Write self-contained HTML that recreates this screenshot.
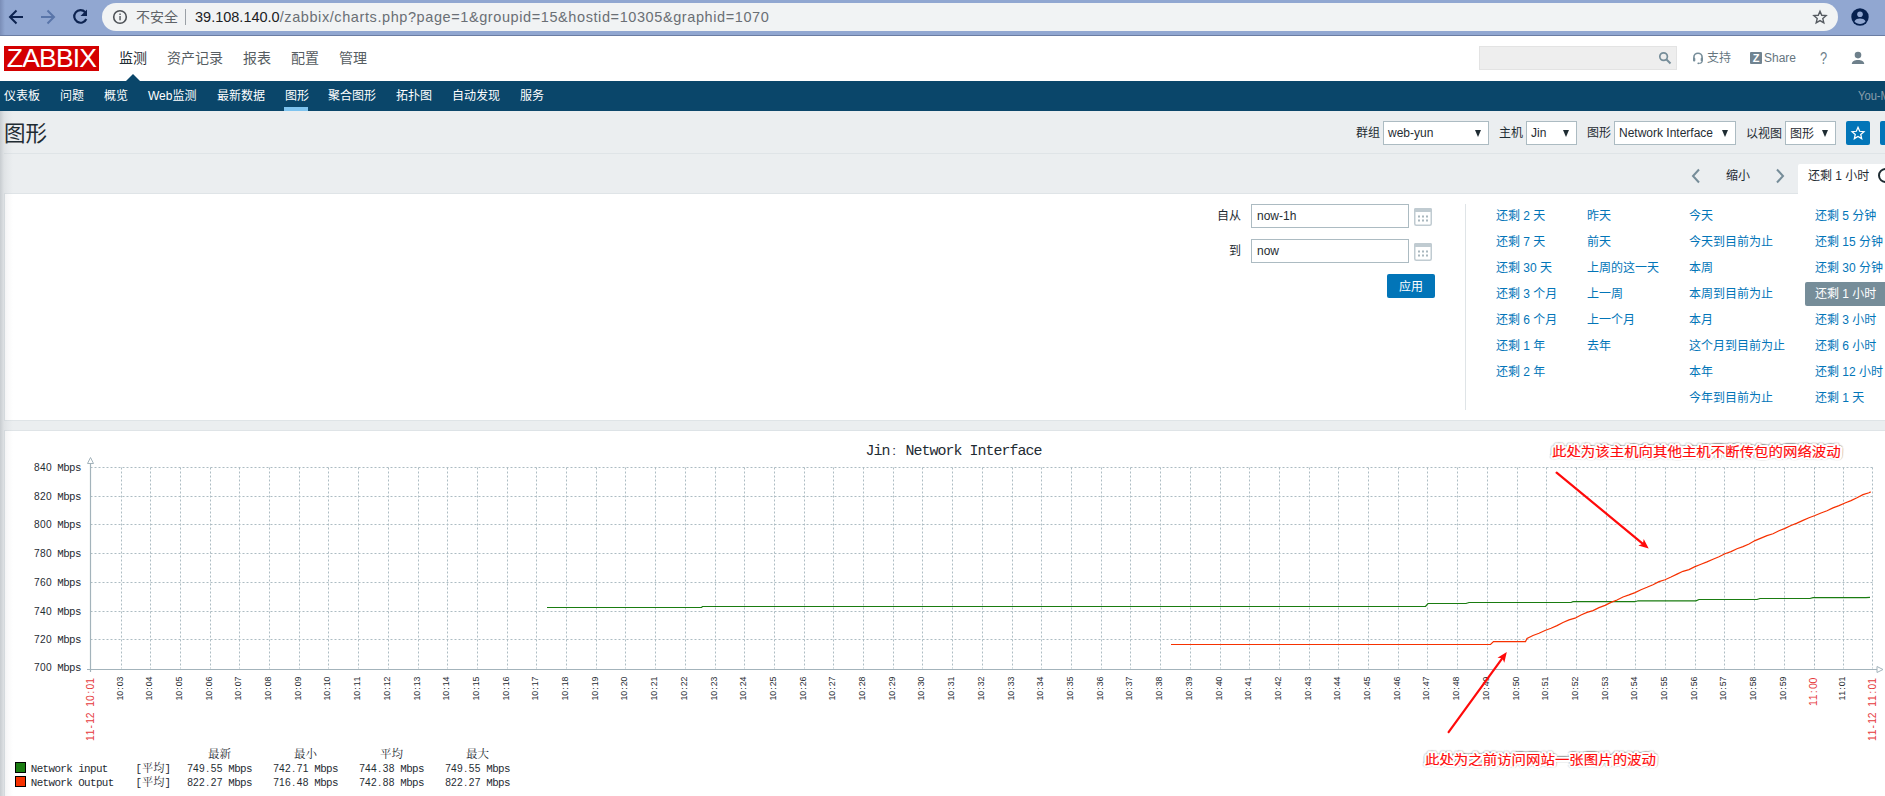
<!DOCTYPE html>
<html lang="zh-CN"><head><meta charset="utf-8"><title>图形</title><style>
*{box-sizing:border-box;margin:0;padding:0}
html,body{width:1885px;height:796px;overflow:hidden;background:#ebeef0}
body{position:relative;font-family:"Liberation Sans","Noto Sans CJK SC",sans-serif;font-size:12px;color:#1f2c33}
.a{position:absolute;white-space:nowrap}
.t{position:absolute;white-space:nowrap;line-height:16px;height:16px}
#bbar{left:0;top:0;width:1885px;height:36px;background:#91a7d1;border-bottom:1px solid #6b7da3}
#pill{left:102px;top:3px;width:1736px;height:28px;border-radius:14px;background:#f1f3f4}
#hdr{left:0;top:36px;width:1885px;height:45px;background:#fff}
#logo{left:4px;top:46px;width:95px;height:25px;background:#d40000;color:#fff;font-size:26.500px;line-height:25px;text-align:center;letter-spacing:-0.8px}
.m1{font-size:14px;color:#565d62;top:50px;line-height:16px}
#nav{left:0;top:81px;width:1885px;height:30px;background:#0a466a}
.m2{font-size:12px;color:#fff;top:88px;line-height:16px}
.lbl{top:125px;line-height:16px;font-size:12px}
.sel{top:121px;height:24px;background:#fff;border:1px solid #acbbc2;font-size:12px;line-height:22px;padding-left:4px}
.sel i{position:absolute;right:7px;top:8px;width:0;height:0;border-left:3.5px solid transparent;border-right:3.5px solid transparent;border-top:7px solid #1f2c33}
.inp{height:24px;background:#fff;border:1px solid #acbbc2;font-size:12px;line-height:22px;padding-left:5px;width:158px;left:1251px}
.lk{color:#0275b8;font-size:12px;line-height:16px}
.btn{background:#0275b8;border-radius:2px;color:#fff}
</style></head><body>
<div class="a" id="bbar"></div>
<div class="a" id="pill"></div>
<svg class="a" style="left:0;top:0" width="100" height="36" viewBox="0 0 100 36">
<g fill="none" stroke="#0d2350" stroke-width="2" stroke-linecap="butt" stroke-linejoin="miter">
<path d="M23 17H10.5M16.5 10.5L10 17l6.500 6.500"/>
</g>
<g fill="none" stroke="#5975a9" stroke-width="2">
<path d="M41 17h12.500M47.500 10.500L54 17l-6.500 6.500"/>
</g>
<g fill="none" stroke="#0d2350" stroke-width="2">
<path d="M85.200 12.200A6.300 6.300 0 1 0 86.300 19" stroke-width="2.200"/>
</g>
<path d="M87 9.500v6.500h-6.500z" fill="#0d2350"/>
</svg>
<svg class="a" style="left:112px;top:9px" width="16" height="16" viewBox="0 0 16 16"><circle cx="8" cy="8" r="6.300" fill="none" stroke="#4d5156" stroke-width="1.600"/><rect x="7.300" y="7" width="1.500" height="4.300" fill="#5f6368"/><rect x="7.300" y="4.500" width="1.500" height="1.500" fill="#5f6368"/></svg>
<div class="t" style="left:136px;top:9px;font-size:14px;color:#5f6368">不安全</div>
<div class="a" style="left:185px;top:9px;width:1px;height:16px;background:#9aa0a6"></div>
<div class="t" id="url" style="left:195px;top:9px;font-size:14.500px;color:#6a6f75"><span style="color:#202124">39.108.140.0</span><span style="letter-spacing:0.590px">/zabbix/charts.php?page=1&amp;groupid=15&amp;hostid=10305&amp;graphid=1070</span></div>
<svg class="a" style="left:1812px;top:9px" width="16" height="16" viewBox="0 0 24 24"><path d="M12 3.300l2.600 6.100 6.600.6-5 4.300 1.500 6.500L12 17.300l-5.700 3.500 1.500-6.500-5-4.300 6.600-.6z" fill="none" stroke="#555a60" stroke-width="2.100" stroke-linejoin="miter"/></svg>
<svg class="a" style="left:1851px;top:8px" width="18" height="18" viewBox="0 0 18 18"><circle cx="9" cy="9" r="8.700" fill="#05204f"/><circle cx="9" cy="6.300" r="2.800" fill="#91a7d1"/><path d="M3.400 13.200c1.200-2 3.200-2.700 5.600-2.700s4.400.7 5.600 2.700c-1.300 1.700-3.300 2.700-5.600 2.700s-4.300-1-5.600-2.700z" fill="#91a7d1"/></svg>
<div class="a" id="hdr"></div>
<div class="a" id="logo">ZABBIX</div>
<div class="a m1" style="left:119px;color:#1f2c33">监测</div>
<div class="a m1" style="left:167px">资产记录</div>
<div class="a m1" style="left:243px">报表</div>
<div class="a m1" style="left:291px">配置</div>
<div class="a m1" style="left:339px">管理</div>
<div class="a" style="left:1479px;top:46px;width:198px;height:24px;background:#eee;border:1px solid #e3e3e3"></div>
<svg class="a" style="left:1658px;top:51px" width="14" height="14" viewBox="0 0 14 14"><circle cx="5.600" cy="5.600" r="3.800" fill="none" stroke="#768d99" stroke-width="1.700"/><path d="M8.500 8.500l4 4" stroke="#768d99" stroke-width="2" /></svg>
<svg class="a" style="left:1692px;top:51px" width="12" height="14" viewBox="0 0 12 14"><path d="M1.900 8V6.300a4.100 4.100 0 0 1 8.200 0V8" fill="none" stroke="#768d99" stroke-width="1.600"/><rect x="1" y="6.800" width="2.300" height="3.700" rx="1" fill="#768d99"/><rect x="8.700" y="6.800" width="2.300" height="3.700" rx="1" fill="#768d99"/><path d="M10.200 10c0 1.800-1.500 2.300-3.600 2.300" fill="none" stroke="#768d99" stroke-width="1.100"/><circle cx="6.300" cy="12.300" r="0.900" fill="#768d99"/></svg>
<div class="t" style="left:1707px;top:50px;color:#66767f">支持</div>
<div class="a" style="left:1750px;top:52px;width:12px;height:12px;background:#718491;border-radius:1px;color:#fff;font-weight:bold;font-size:11px;line-height:12px;text-align:center">Z</div>
<div class="t" style="left:1764px;top:50px;color:#66767f">Share</div>
<div class="t" style="left:1819px;top:51px;font-size:16px;color:#6e808b;transform:scaleX(.8)">?</div>
<svg class="a" style="left:1851px;top:51px" width="14" height="14" viewBox="0 0 14 14"><circle cx="7" cy="4.100" r="3.300" fill="#6e808b"/><path d="M0.800 13c0-3 2.800-4.100 6.200-4.100s6.200 1.100 6.200 4.100z" fill="#6e808b"/></svg>
<div class="a" id="nav"></div>
<div class="a" style="left:126px;top:74px;width:0;height:0;border-left:7px solid transparent;border-right:7px solid transparent;border-bottom:7px solid #0a466a"></div>
<div class="a m2" style="left:4px">仪表板</div>
<div class="a m2" style="left:60px">问题</div>
<div class="a m2" style="left:104px">概览</div>
<div class="a m2" style="left:148px">Web监测</div>
<div class="a m2" style="left:217px">最新数据</div>
<div class="a m2" style="left:285px">图形</div>
<div class="a m2" style="left:328px">聚合图形</div>
<div class="a m2" style="left:396px">拓扑图</div>
<div class="a m2" style="left:452px">自动发现</div>
<div class="a m2" style="left:520px">服务</div>
<div class="a" style="left:284px;top:107px;width:24px;height:4px;background:#7fc4ef"></div>
<div class="t" style="left:1857.500px;top:88px;font-size:12px;color:#8a9fac;transform:scaleX(.93);transform-origin:0 0">You-M</div>
<div class="a" style="left:4px;top:120px;font-size:21.500px;line-height:28px;color:#1f2c33">图形</div>
<div class="a lbl" style="left:1356px">群组</div>
<div class="a sel" style="left:1383px;width:106px">web-yun<i></i></div>
<div class="a lbl" style="left:1499px">主机</div>
<div class="a sel" style="left:1526px;width:51px">Jin<i></i></div>
<div class="a lbl" style="left:1587px">图形</div>
<div class="a sel" style="left:1614px;width:122px">Network Interface<i></i></div>
<div class="a lbl" style="left:1746px;top:126px">以视图</div>
<div class="a sel" style="left:1785px;width:51px;line-height:24px">图形<i></i></div>
<div class="a btn" style="left:1846px;top:121px;width:24px;height:24px"></div>
<svg class="a" style="left:1850px;top:125px" width="16" height="16" viewBox="0 0 24 24"><path d="M12 3.500l2.500 5.900 6.400.6-4.800 4.200 1.400 6.300L12 17.200l-5.500 3.300 1.400-6.300-4.800-4.200 6.400-.6z" fill="none" stroke="#fff" stroke-width="1.900" stroke-linejoin="miter"/></svg>
<div class="a btn" style="left:1880px;top:121px;width:24px;height:24px"></div>
<div class="a" style="left:4px;top:153px;width:1881px;height:1px;background:#dfe4e7"></div>
<svg class="a" style="left:1690px;top:168px" width="12" height="16" viewBox="0 0 12 16"><path d="M9 1.500L3 8l6 6.500" fill="none" stroke="#768d99" stroke-width="2"/></svg>
<div class="t" style="left:1726px;top:168px">缩小</div>
<svg class="a" style="left:1774px;top:168px" width="12" height="16" viewBox="0 0 12 16"><path d="M3 1.500L9 8l-6 6.500" fill="none" stroke="#768d99" stroke-width="2"/></svg>
<div class="a" style="left:1798px;top:164px;width:100px;height:32px;background:#fff;border-radius:2px 0 0 0"></div>
<div class="t" style="left:1808px;top:168px">还剩 1 小时</div>
<div class="a" style="left:1878px;top:168px;width:15px;height:15px;border:2px solid #1f2c33;border-radius:50%"></div>
<div class="a" style="left:4px;top:193px;width:1881px;height:228px;background:#fff;border:1px solid #dfe4e7;border-right:0"></div>
<div class="a" style="left:1798px;top:190px;width:100px;height:6px;background:#fff"></div>
<div class="t" style="left:1217px;top:208px">自从</div>
<div class="a inp" style="top:204px">now-1h</div>
<div class="t" style="left:1229px;top:243px">到</div>
<div class="a inp" style="top:239px">now</div>
<svg class="a" style="left:1414px;top:208px" width="18" height="18" viewBox="0 0 18 18"><rect x="0.750" y="0.750" width="16.500" height="16.500" rx="1.500" fill="#fff" stroke="#c0cbd1" stroke-width="1.500"/><rect x="0" y="0" width="18" height="4" rx="1.500" fill="#c0cbd1"/><g fill="#a9b7be"><rect x="4" y="7.500" width="2" height="2"/><rect x="8" y="7.500" width="2" height="2"/><rect x="12" y="7.500" width="2" height="2"/><rect x="4" y="11.500" width="2" height="2"/><rect x="8" y="11.500" width="2" height="2"/><rect x="12" y="11.500" width="2" height="2"/></g></svg>
<svg class="a" style="left:1414px;top:243px" width="18" height="18" viewBox="0 0 18 18"><rect x="0.750" y="0.750" width="16.500" height="16.500" rx="1.500" fill="#fff" stroke="#c0cbd1" stroke-width="1.500"/><rect x="0" y="0" width="18" height="4" rx="1.500" fill="#c0cbd1"/><g fill="#a9b7be"><rect x="4" y="7.500" width="2" height="2"/><rect x="8" y="7.500" width="2" height="2"/><rect x="12" y="7.500" width="2" height="2"/><rect x="4" y="11.500" width="2" height="2"/><rect x="8" y="11.500" width="2" height="2"/><rect x="12" y="11.500" width="2" height="2"/></g></svg>
<div class="a btn" style="left:1387px;top:274px;width:48px;height:24px;line-height:26px;text-align:center;font-size:12px">应用</div>
<div class="a" style="left:1465px;top:204px;width:1px;height:206px;background:#dfe4e7"></div>
<div class="a" style="left:1805px;top:282px;width:90px;height:24px;background:#768d99;border-radius:2px"></div>
<div class="a lk" style="left:1496px;top:208px">还剩 2 天</div>
<div class="a lk" style="left:1496px;top:234px">还剩 7 天</div>
<div class="a lk" style="left:1496px;top:260px">还剩 30 天</div>
<div class="a lk" style="left:1496px;top:286px">还剩 3 个月</div>
<div class="a lk" style="left:1496px;top:312px">还剩 6 个月</div>
<div class="a lk" style="left:1496px;top:338px">还剩 1 年</div>
<div class="a lk" style="left:1496px;top:364px">还剩 2 年</div>
<div class="a lk" style="left:1587px;top:208px">昨天</div>
<div class="a lk" style="left:1587px;top:234px">前天</div>
<div class="a lk" style="left:1587px;top:260px">上周的这一天</div>
<div class="a lk" style="left:1587px;top:286px">上一周</div>
<div class="a lk" style="left:1587px;top:312px">上一个月</div>
<div class="a lk" style="left:1587px;top:338px">去年</div>
<div class="a lk" style="left:1689px;top:208px">今天</div>
<div class="a lk" style="left:1689px;top:234px">今天到目前为止</div>
<div class="a lk" style="left:1689px;top:260px">本周</div>
<div class="a lk" style="left:1689px;top:286px">本周到目前为止</div>
<div class="a lk" style="left:1689px;top:312px">本月</div>
<div class="a lk" style="left:1689px;top:338px">这个月到目前为止</div>
<div class="a lk" style="left:1689px;top:364px">本年</div>
<div class="a lk" style="left:1689px;top:390px">今年到目前为止</div>
<div class="a lk" style="left:1815px;top:208px">还剩 5 分钟</div>
<div class="a lk" style="left:1815px;top:234px">还剩 15 分钟</div>
<div class="a lk" style="left:1815px;top:260px">还剩 30 分钟</div>
<div class="a lk" style="left:1815px;top:286px;color:#fff">还剩 1 小时</div>
<div class="a lk" style="left:1815px;top:312px">还剩 3 小时</div>
<div class="a lk" style="left:1815px;top:338px">还剩 6 小时</div>
<div class="a lk" style="left:1815px;top:364px">还剩 12 小时</div>
<div class="a lk" style="left:1815px;top:390px">还剩 1 天</div>
<div class="a" style="left:4px;top:430px;width:1881px;height:370px;background:#fff;border:1px solid #dfe4e7;border-right:0"></div>
<svg class="a" style="left:0;top:0;font-family:'Liberation Mono','Noto Serif CJK SC',monospace" width="1885" height="796" viewBox="0 0 1885 796">
<text xml:space="preserve" transform="translate(81.20,671.10)" x="-47.08 -41.18 -35.28 -29.80 -23.90 -18.00 -12.09 -6.19" y="0" font-size="10.82" fill="#1f2c33"><tspan font-family="'Liberation Sans','Noto Sans CJK SC',sans-serif" font-size="10.20">700</tspan> Mbps</text>
<line x1="90.5" y1="639.5" x2="1872.5" y2="639.5" stroke="#adbcc3" stroke-width="1" stroke-dasharray="2 2"/>
<text xml:space="preserve" transform="translate(81.20,643.10)" x="-47.08 -41.18 -35.28 -29.80 -23.90 -18.00 -12.09 -6.19" y="0" font-size="10.82" fill="#1f2c33"><tspan font-family="'Liberation Sans','Noto Sans CJK SC',sans-serif" font-size="10.20">720</tspan> Mbps</text>
<line x1="90.5" y1="611.5" x2="1872.5" y2="611.5" stroke="#adbcc3" stroke-width="1" stroke-dasharray="2 2"/>
<text xml:space="preserve" transform="translate(81.20,615.10)" x="-47.08 -41.18 -35.28 -29.80 -23.90 -18.00 -12.09 -6.19" y="0" font-size="10.82" fill="#1f2c33"><tspan font-family="'Liberation Sans','Noto Sans CJK SC',sans-serif" font-size="10.20">740</tspan> Mbps</text>
<line x1="90.5" y1="582.5" x2="1872.5" y2="582.5" stroke="#adbcc3" stroke-width="1" stroke-dasharray="2 2"/>
<text xml:space="preserve" transform="translate(81.20,586.10)" x="-47.08 -41.18 -35.28 -29.80 -23.90 -18.00 -12.09 -6.19" y="0" font-size="10.82" fill="#1f2c33"><tspan font-family="'Liberation Sans','Noto Sans CJK SC',sans-serif" font-size="10.20">760</tspan> Mbps</text>
<line x1="90.5" y1="553.5" x2="1872.5" y2="553.5" stroke="#adbcc3" stroke-width="1" stroke-dasharray="2 2"/>
<text xml:space="preserve" transform="translate(81.20,557.10)" x="-47.08 -41.18 -35.28 -29.80 -23.90 -18.00 -12.09 -6.19" y="0" font-size="10.82" fill="#1f2c33"><tspan font-family="'Liberation Sans','Noto Sans CJK SC',sans-serif" font-size="10.20">780</tspan> Mbps</text>
<line x1="90.5" y1="524.5" x2="1872.5" y2="524.5" stroke="#adbcc3" stroke-width="1" stroke-dasharray="2 2"/>
<text xml:space="preserve" transform="translate(81.20,528.10)" x="-47.08 -41.18 -35.28 -29.80 -23.90 -18.00 -12.09 -6.19" y="0" font-size="10.82" fill="#1f2c33"><tspan font-family="'Liberation Sans','Noto Sans CJK SC',sans-serif" font-size="10.20">800</tspan> Mbps</text>
<line x1="90.5" y1="496.5" x2="1872.5" y2="496.5" stroke="#adbcc3" stroke-width="1" stroke-dasharray="2 2"/>
<text xml:space="preserve" transform="translate(81.20,500.10)" x="-47.08 -41.18 -35.28 -29.80 -23.90 -18.00 -12.09 -6.19" y="0" font-size="10.82" fill="#1f2c33"><tspan font-family="'Liberation Sans','Noto Sans CJK SC',sans-serif" font-size="10.20">820</tspan> Mbps</text>
<line x1="90.5" y1="467.5" x2="1872.5" y2="467.5" stroke="#adbcc3" stroke-width="1" stroke-dasharray="2 2"/>
<text xml:space="preserve" transform="translate(81.20,471.10)" x="-47.08 -41.18 -35.28 -29.80 -23.90 -18.00 -12.09 -6.19" y="0" font-size="10.82" fill="#1f2c33"><tspan font-family="'Liberation Sans','Noto Sans CJK SC',sans-serif" font-size="10.20">840</tspan> Mbps</text>
<line x1="121.5" y1="467.5" x2="121.5" y2="668.5" stroke="#adbcc3" stroke-width="1" stroke-dasharray="2 2"/>
<text xml:space="preserve" transform="translate(123.30,700.40) rotate(-90)" x="-0.07 4.69 10.68 14.21 18.97" y="0" font-size="8.73" fill="#1f2c33"><tspan font-family="'Liberation Sans','Noto Sans CJK SC',sans-serif" font-size="8.80">10:03</tspan></text>
<line x1="150.5" y1="467.5" x2="150.5" y2="668.5" stroke="#adbcc3" stroke-width="1" stroke-dasharray="2 2"/>
<text xml:space="preserve" transform="translate(152.30,700.40) rotate(-90)" x="-0.07 4.69 10.68 14.21 18.97" y="0" font-size="8.73" fill="#1f2c33"><tspan font-family="'Liberation Sans','Noto Sans CJK SC',sans-serif" font-size="8.80">10:04</tspan></text>
<line x1="180.5" y1="467.5" x2="180.5" y2="668.5" stroke="#adbcc3" stroke-width="1" stroke-dasharray="2 2"/>
<text xml:space="preserve" transform="translate(182.30,700.40) rotate(-90)" x="-0.07 4.69 10.68 14.21 18.97" y="0" font-size="8.73" fill="#1f2c33"><tspan font-family="'Liberation Sans','Noto Sans CJK SC',sans-serif" font-size="8.80">10:05</tspan></text>
<line x1="210.5" y1="467.5" x2="210.5" y2="668.5" stroke="#adbcc3" stroke-width="1" stroke-dasharray="2 2"/>
<text xml:space="preserve" transform="translate(212.30,700.40) rotate(-90)" x="-0.07 4.69 10.68 14.21 18.97" y="0" font-size="8.73" fill="#1f2c33"><tspan font-family="'Liberation Sans','Noto Sans CJK SC',sans-serif" font-size="8.80">10:06</tspan></text>
<line x1="239.5" y1="467.5" x2="239.5" y2="668.5" stroke="#adbcc3" stroke-width="1" stroke-dasharray="2 2"/>
<text xml:space="preserve" transform="translate(241.30,700.40) rotate(-90)" x="-0.07 4.69 10.68 14.21 18.97" y="0" font-size="8.73" fill="#1f2c33"><tspan font-family="'Liberation Sans','Noto Sans CJK SC',sans-serif" font-size="8.80">10:07</tspan></text>
<line x1="269.5" y1="467.5" x2="269.5" y2="668.5" stroke="#adbcc3" stroke-width="1" stroke-dasharray="2 2"/>
<text xml:space="preserve" transform="translate(271.30,700.40) rotate(-90)" x="-0.07 4.69 10.68 14.21 18.97" y="0" font-size="8.73" fill="#1f2c33"><tspan font-family="'Liberation Sans','Noto Sans CJK SC',sans-serif" font-size="8.80">10:08</tspan></text>
<line x1="299.5" y1="467.5" x2="299.5" y2="668.5" stroke="#adbcc3" stroke-width="1" stroke-dasharray="2 2"/>
<text xml:space="preserve" transform="translate(301.30,700.40) rotate(-90)" x="-0.07 4.69 10.68 14.21 18.97" y="0" font-size="8.73" fill="#1f2c33"><tspan font-family="'Liberation Sans','Noto Sans CJK SC',sans-serif" font-size="8.80">10:09</tspan></text>
<line x1="328.5" y1="467.5" x2="328.5" y2="668.5" stroke="#adbcc3" stroke-width="1" stroke-dasharray="2 2"/>
<text xml:space="preserve" transform="translate(330.30,700.40) rotate(-90)" x="-0.07 4.69 10.68 14.21 18.97" y="0" font-size="8.73" fill="#1f2c33"><tspan font-family="'Liberation Sans','Noto Sans CJK SC',sans-serif" font-size="8.80">10:10</tspan></text>
<line x1="358.5" y1="467.5" x2="358.5" y2="668.5" stroke="#adbcc3" stroke-width="1" stroke-dasharray="2 2"/>
<text xml:space="preserve" transform="translate(360.30,700.40) rotate(-90)" x="-0.07 4.69 10.68 14.21 18.97" y="0" font-size="8.73" fill="#1f2c33"><tspan font-family="'Liberation Sans','Noto Sans CJK SC',sans-serif" font-size="8.80">10:11</tspan></text>
<line x1="388.5" y1="467.5" x2="388.5" y2="668.5" stroke="#adbcc3" stroke-width="1" stroke-dasharray="2 2"/>
<text xml:space="preserve" transform="translate(390.30,700.40) rotate(-90)" x="-0.07 4.69 10.68 14.21 18.97" y="0" font-size="8.73" fill="#1f2c33"><tspan font-family="'Liberation Sans','Noto Sans CJK SC',sans-serif" font-size="8.80">10:12</tspan></text>
<line x1="418.5" y1="467.5" x2="418.5" y2="668.5" stroke="#adbcc3" stroke-width="1" stroke-dasharray="2 2"/>
<text xml:space="preserve" transform="translate(420.30,700.40) rotate(-90)" x="-0.07 4.69 10.68 14.21 18.97" y="0" font-size="8.73" fill="#1f2c33"><tspan font-family="'Liberation Sans','Noto Sans CJK SC',sans-serif" font-size="8.80">10:13</tspan></text>
<line x1="447.5" y1="467.5" x2="447.5" y2="668.5" stroke="#adbcc3" stroke-width="1" stroke-dasharray="2 2"/>
<text xml:space="preserve" transform="translate(449.30,700.40) rotate(-90)" x="-0.07 4.69 10.68 14.21 18.97" y="0" font-size="8.73" fill="#1f2c33"><tspan font-family="'Liberation Sans','Noto Sans CJK SC',sans-serif" font-size="8.80">10:14</tspan></text>
<line x1="477.5" y1="467.5" x2="477.5" y2="668.5" stroke="#adbcc3" stroke-width="1" stroke-dasharray="2 2"/>
<text xml:space="preserve" transform="translate(479.30,700.40) rotate(-90)" x="-0.07 4.69 10.68 14.21 18.97" y="0" font-size="8.73" fill="#1f2c33"><tspan font-family="'Liberation Sans','Noto Sans CJK SC',sans-serif" font-size="8.80">10:15</tspan></text>
<line x1="507.5" y1="467.5" x2="507.5" y2="668.5" stroke="#adbcc3" stroke-width="1" stroke-dasharray="2 2"/>
<text xml:space="preserve" transform="translate(509.30,700.40) rotate(-90)" x="-0.07 4.69 10.68 14.21 18.97" y="0" font-size="8.73" fill="#1f2c33"><tspan font-family="'Liberation Sans','Noto Sans CJK SC',sans-serif" font-size="8.80">10:16</tspan></text>
<line x1="536.5" y1="467.5" x2="536.5" y2="668.5" stroke="#adbcc3" stroke-width="1" stroke-dasharray="2 2"/>
<text xml:space="preserve" transform="translate(538.30,700.40) rotate(-90)" x="-0.07 4.69 10.68 14.21 18.97" y="0" font-size="8.73" fill="#1f2c33"><tspan font-family="'Liberation Sans','Noto Sans CJK SC',sans-serif" font-size="8.80">10:17</tspan></text>
<line x1="566.5" y1="467.5" x2="566.5" y2="668.5" stroke="#adbcc3" stroke-width="1" stroke-dasharray="2 2"/>
<text xml:space="preserve" transform="translate(568.30,700.40) rotate(-90)" x="-0.07 4.69 10.68 14.21 18.97" y="0" font-size="8.73" fill="#1f2c33"><tspan font-family="'Liberation Sans','Noto Sans CJK SC',sans-serif" font-size="8.80">10:18</tspan></text>
<line x1="596.5" y1="467.5" x2="596.5" y2="668.5" stroke="#adbcc3" stroke-width="1" stroke-dasharray="2 2"/>
<text xml:space="preserve" transform="translate(598.30,700.40) rotate(-90)" x="-0.07 4.69 10.68 14.21 18.97" y="0" font-size="8.73" fill="#1f2c33"><tspan font-family="'Liberation Sans','Noto Sans CJK SC',sans-serif" font-size="8.80">10:19</tspan></text>
<line x1="625.5" y1="467.5" x2="625.5" y2="668.5" stroke="#adbcc3" stroke-width="1" stroke-dasharray="2 2"/>
<text xml:space="preserve" transform="translate(627.30,700.40) rotate(-90)" x="-0.07 4.69 10.68 14.21 18.97" y="0" font-size="8.73" fill="#1f2c33"><tspan font-family="'Liberation Sans','Noto Sans CJK SC',sans-serif" font-size="8.80">10:20</tspan></text>
<line x1="655.5" y1="467.5" x2="655.5" y2="668.5" stroke="#adbcc3" stroke-width="1" stroke-dasharray="2 2"/>
<text xml:space="preserve" transform="translate(657.30,700.40) rotate(-90)" x="-0.07 4.69 10.68 14.21 18.97" y="0" font-size="8.73" fill="#1f2c33"><tspan font-family="'Liberation Sans','Noto Sans CJK SC',sans-serif" font-size="8.80">10:21</tspan></text>
<line x1="685.5" y1="467.5" x2="685.5" y2="668.5" stroke="#adbcc3" stroke-width="1" stroke-dasharray="2 2"/>
<text xml:space="preserve" transform="translate(687.30,700.40) rotate(-90)" x="-0.07 4.69 10.68 14.21 18.97" y="0" font-size="8.73" fill="#1f2c33"><tspan font-family="'Liberation Sans','Noto Sans CJK SC',sans-serif" font-size="8.80">10:22</tspan></text>
<line x1="715.5" y1="467.5" x2="715.5" y2="668.5" stroke="#adbcc3" stroke-width="1" stroke-dasharray="2 2"/>
<text xml:space="preserve" transform="translate(717.30,700.40) rotate(-90)" x="-0.07 4.69 10.68 14.21 18.97" y="0" font-size="8.73" fill="#1f2c33"><tspan font-family="'Liberation Sans','Noto Sans CJK SC',sans-serif" font-size="8.80">10:23</tspan></text>
<line x1="744.5" y1="467.5" x2="744.5" y2="668.5" stroke="#adbcc3" stroke-width="1" stroke-dasharray="2 2"/>
<text xml:space="preserve" transform="translate(746.30,700.40) rotate(-90)" x="-0.07 4.69 10.68 14.21 18.97" y="0" font-size="8.73" fill="#1f2c33"><tspan font-family="'Liberation Sans','Noto Sans CJK SC',sans-serif" font-size="8.80">10:24</tspan></text>
<line x1="774.5" y1="467.5" x2="774.5" y2="668.5" stroke="#adbcc3" stroke-width="1" stroke-dasharray="2 2"/>
<text xml:space="preserve" transform="translate(776.30,700.40) rotate(-90)" x="-0.07 4.69 10.68 14.21 18.97" y="0" font-size="8.73" fill="#1f2c33"><tspan font-family="'Liberation Sans','Noto Sans CJK SC',sans-serif" font-size="8.80">10:25</tspan></text>
<line x1="804.5" y1="467.5" x2="804.5" y2="668.5" stroke="#adbcc3" stroke-width="1" stroke-dasharray="2 2"/>
<text xml:space="preserve" transform="translate(806.30,700.40) rotate(-90)" x="-0.07 4.69 10.68 14.21 18.97" y="0" font-size="8.73" fill="#1f2c33"><tspan font-family="'Liberation Sans','Noto Sans CJK SC',sans-serif" font-size="8.80">10:26</tspan></text>
<line x1="833.5" y1="467.5" x2="833.5" y2="668.5" stroke="#adbcc3" stroke-width="1" stroke-dasharray="2 2"/>
<text xml:space="preserve" transform="translate(835.30,700.40) rotate(-90)" x="-0.07 4.69 10.68 14.21 18.97" y="0" font-size="8.73" fill="#1f2c33"><tspan font-family="'Liberation Sans','Noto Sans CJK SC',sans-serif" font-size="8.80">10:27</tspan></text>
<line x1="863.5" y1="467.5" x2="863.5" y2="668.5" stroke="#adbcc3" stroke-width="1" stroke-dasharray="2 2"/>
<text xml:space="preserve" transform="translate(865.30,700.40) rotate(-90)" x="-0.07 4.69 10.68 14.21 18.97" y="0" font-size="8.73" fill="#1f2c33"><tspan font-family="'Liberation Sans','Noto Sans CJK SC',sans-serif" font-size="8.80">10:28</tspan></text>
<line x1="893.5" y1="467.5" x2="893.5" y2="668.5" stroke="#adbcc3" stroke-width="1" stroke-dasharray="2 2"/>
<text xml:space="preserve" transform="translate(895.30,700.40) rotate(-90)" x="-0.07 4.69 10.68 14.21 18.97" y="0" font-size="8.73" fill="#1f2c33"><tspan font-family="'Liberation Sans','Noto Sans CJK SC',sans-serif" font-size="8.80">10:29</tspan></text>
<line x1="922.5" y1="467.5" x2="922.5" y2="668.5" stroke="#adbcc3" stroke-width="1" stroke-dasharray="2 2"/>
<text xml:space="preserve" transform="translate(924.30,700.40) rotate(-90)" x="-0.07 4.69 10.68 14.21 18.97" y="0" font-size="8.73" fill="#1f2c33"><tspan font-family="'Liberation Sans','Noto Sans CJK SC',sans-serif" font-size="8.80">10:30</tspan></text>
<line x1="952.5" y1="467.5" x2="952.5" y2="668.5" stroke="#adbcc3" stroke-width="1" stroke-dasharray="2 2"/>
<text xml:space="preserve" transform="translate(954.30,700.40) rotate(-90)" x="-0.07 4.69 10.68 14.21 18.97" y="0" font-size="8.73" fill="#1f2c33"><tspan font-family="'Liberation Sans','Noto Sans CJK SC',sans-serif" font-size="8.80">10:31</tspan></text>
<line x1="982.5" y1="467.5" x2="982.5" y2="668.5" stroke="#adbcc3" stroke-width="1" stroke-dasharray="2 2"/>
<text xml:space="preserve" transform="translate(984.30,700.40) rotate(-90)" x="-0.07 4.69 10.68 14.21 18.97" y="0" font-size="8.73" fill="#1f2c33"><tspan font-family="'Liberation Sans','Noto Sans CJK SC',sans-serif" font-size="8.80">10:32</tspan></text>
<line x1="1012.5" y1="467.5" x2="1012.5" y2="668.5" stroke="#adbcc3" stroke-width="1" stroke-dasharray="2 2"/>
<text xml:space="preserve" transform="translate(1014.30,700.40) rotate(-90)" x="-0.07 4.69 10.68 14.21 18.97" y="0" font-size="8.73" fill="#1f2c33"><tspan font-family="'Liberation Sans','Noto Sans CJK SC',sans-serif" font-size="8.80">10:33</tspan></text>
<line x1="1041.5" y1="467.5" x2="1041.5" y2="668.5" stroke="#adbcc3" stroke-width="1" stroke-dasharray="2 2"/>
<text xml:space="preserve" transform="translate(1043.30,700.40) rotate(-90)" x="-0.07 4.69 10.68 14.21 18.97" y="0" font-size="8.73" fill="#1f2c33"><tspan font-family="'Liberation Sans','Noto Sans CJK SC',sans-serif" font-size="8.80">10:34</tspan></text>
<line x1="1071.5" y1="467.5" x2="1071.5" y2="668.5" stroke="#adbcc3" stroke-width="1" stroke-dasharray="2 2"/>
<text xml:space="preserve" transform="translate(1073.30,700.40) rotate(-90)" x="-0.07 4.69 10.68 14.21 18.97" y="0" font-size="8.73" fill="#1f2c33"><tspan font-family="'Liberation Sans','Noto Sans CJK SC',sans-serif" font-size="8.80">10:35</tspan></text>
<line x1="1101.5" y1="467.5" x2="1101.5" y2="668.5" stroke="#adbcc3" stroke-width="1" stroke-dasharray="2 2"/>
<text xml:space="preserve" transform="translate(1103.30,700.40) rotate(-90)" x="-0.07 4.69 10.68 14.21 18.97" y="0" font-size="8.73" fill="#1f2c33"><tspan font-family="'Liberation Sans','Noto Sans CJK SC',sans-serif" font-size="8.80">10:36</tspan></text>
<line x1="1130.5" y1="467.5" x2="1130.5" y2="668.5" stroke="#adbcc3" stroke-width="1" stroke-dasharray="2 2"/>
<text xml:space="preserve" transform="translate(1132.30,700.40) rotate(-90)" x="-0.07 4.69 10.68 14.21 18.97" y="0" font-size="8.73" fill="#1f2c33"><tspan font-family="'Liberation Sans','Noto Sans CJK SC',sans-serif" font-size="8.80">10:37</tspan></text>
<line x1="1160.5" y1="467.5" x2="1160.5" y2="668.5" stroke="#adbcc3" stroke-width="1" stroke-dasharray="2 2"/>
<text xml:space="preserve" transform="translate(1162.30,700.40) rotate(-90)" x="-0.07 4.69 10.68 14.21 18.97" y="0" font-size="8.73" fill="#1f2c33"><tspan font-family="'Liberation Sans','Noto Sans CJK SC',sans-serif" font-size="8.80">10:38</tspan></text>
<line x1="1190.5" y1="467.5" x2="1190.5" y2="668.5" stroke="#adbcc3" stroke-width="1" stroke-dasharray="2 2"/>
<text xml:space="preserve" transform="translate(1192.30,700.40) rotate(-90)" x="-0.07 4.69 10.68 14.21 18.97" y="0" font-size="8.73" fill="#1f2c33"><tspan font-family="'Liberation Sans','Noto Sans CJK SC',sans-serif" font-size="8.80">10:39</tspan></text>
<line x1="1220.5" y1="467.5" x2="1220.5" y2="668.5" stroke="#adbcc3" stroke-width="1" stroke-dasharray="2 2"/>
<text xml:space="preserve" transform="translate(1222.30,700.40) rotate(-90)" x="-0.07 4.69 10.68 14.21 18.97" y="0" font-size="8.73" fill="#1f2c33"><tspan font-family="'Liberation Sans','Noto Sans CJK SC',sans-serif" font-size="8.80">10:40</tspan></text>
<line x1="1249.5" y1="467.5" x2="1249.5" y2="668.5" stroke="#adbcc3" stroke-width="1" stroke-dasharray="2 2"/>
<text xml:space="preserve" transform="translate(1251.30,700.40) rotate(-90)" x="-0.07 4.69 10.68 14.21 18.97" y="0" font-size="8.73" fill="#1f2c33"><tspan font-family="'Liberation Sans','Noto Sans CJK SC',sans-serif" font-size="8.80">10:41</tspan></text>
<line x1="1279.5" y1="467.5" x2="1279.5" y2="668.5" stroke="#adbcc3" stroke-width="1" stroke-dasharray="2 2"/>
<text xml:space="preserve" transform="translate(1281.30,700.40) rotate(-90)" x="-0.07 4.69 10.68 14.21 18.97" y="0" font-size="8.73" fill="#1f2c33"><tspan font-family="'Liberation Sans','Noto Sans CJK SC',sans-serif" font-size="8.80">10:42</tspan></text>
<line x1="1309.5" y1="467.5" x2="1309.5" y2="668.5" stroke="#adbcc3" stroke-width="1" stroke-dasharray="2 2"/>
<text xml:space="preserve" transform="translate(1311.30,700.40) rotate(-90)" x="-0.07 4.69 10.68 14.21 18.97" y="0" font-size="8.73" fill="#1f2c33"><tspan font-family="'Liberation Sans','Noto Sans CJK SC',sans-serif" font-size="8.80">10:43</tspan></text>
<line x1="1338.5" y1="467.5" x2="1338.5" y2="668.5" stroke="#adbcc3" stroke-width="1" stroke-dasharray="2 2"/>
<text xml:space="preserve" transform="translate(1340.30,700.40) rotate(-90)" x="-0.07 4.69 10.68 14.21 18.97" y="0" font-size="8.73" fill="#1f2c33"><tspan font-family="'Liberation Sans','Noto Sans CJK SC',sans-serif" font-size="8.80">10:44</tspan></text>
<line x1="1368.5" y1="467.5" x2="1368.5" y2="668.5" stroke="#adbcc3" stroke-width="1" stroke-dasharray="2 2"/>
<text xml:space="preserve" transform="translate(1370.30,700.40) rotate(-90)" x="-0.07 4.69 10.68 14.21 18.97" y="0" font-size="8.73" fill="#1f2c33"><tspan font-family="'Liberation Sans','Noto Sans CJK SC',sans-serif" font-size="8.80">10:45</tspan></text>
<line x1="1398.5" y1="467.5" x2="1398.5" y2="668.5" stroke="#adbcc3" stroke-width="1" stroke-dasharray="2 2"/>
<text xml:space="preserve" transform="translate(1400.30,700.40) rotate(-90)" x="-0.07 4.69 10.68 14.21 18.97" y="0" font-size="8.73" fill="#1f2c33"><tspan font-family="'Liberation Sans','Noto Sans CJK SC',sans-serif" font-size="8.80">10:46</tspan></text>
<line x1="1427.5" y1="467.5" x2="1427.5" y2="668.5" stroke="#adbcc3" stroke-width="1" stroke-dasharray="2 2"/>
<text xml:space="preserve" transform="translate(1429.30,700.40) rotate(-90)" x="-0.07 4.69 10.68 14.21 18.97" y="0" font-size="8.73" fill="#1f2c33"><tspan font-family="'Liberation Sans','Noto Sans CJK SC',sans-serif" font-size="8.80">10:47</tspan></text>
<line x1="1457.5" y1="467.5" x2="1457.5" y2="668.5" stroke="#adbcc3" stroke-width="1" stroke-dasharray="2 2"/>
<text xml:space="preserve" transform="translate(1459.30,700.40) rotate(-90)" x="-0.07 4.69 10.68 14.21 18.97" y="0" font-size="8.73" fill="#1f2c33"><tspan font-family="'Liberation Sans','Noto Sans CJK SC',sans-serif" font-size="8.80">10:48</tspan></text>
<line x1="1487.5" y1="467.5" x2="1487.5" y2="668.5" stroke="#adbcc3" stroke-width="1" stroke-dasharray="2 2"/>
<text xml:space="preserve" transform="translate(1489.30,700.40) rotate(-90)" x="-0.07 4.69 10.68 14.21 18.97" y="0" font-size="8.73" fill="#1f2c33"><tspan font-family="'Liberation Sans','Noto Sans CJK SC',sans-serif" font-size="8.80">10:49</tspan></text>
<line x1="1517.5" y1="467.5" x2="1517.5" y2="668.5" stroke="#adbcc3" stroke-width="1" stroke-dasharray="2 2"/>
<text xml:space="preserve" transform="translate(1519.30,700.40) rotate(-90)" x="-0.07 4.69 10.68 14.21 18.97" y="0" font-size="8.73" fill="#1f2c33"><tspan font-family="'Liberation Sans','Noto Sans CJK SC',sans-serif" font-size="8.80">10:50</tspan></text>
<line x1="1546.5" y1="467.5" x2="1546.5" y2="668.5" stroke="#adbcc3" stroke-width="1" stroke-dasharray="2 2"/>
<text xml:space="preserve" transform="translate(1548.30,700.40) rotate(-90)" x="-0.07 4.69 10.68 14.21 18.97" y="0" font-size="8.73" fill="#1f2c33"><tspan font-family="'Liberation Sans','Noto Sans CJK SC',sans-serif" font-size="8.80">10:51</tspan></text>
<line x1="1576.5" y1="467.5" x2="1576.5" y2="668.5" stroke="#adbcc3" stroke-width="1" stroke-dasharray="2 2"/>
<text xml:space="preserve" transform="translate(1578.30,700.40) rotate(-90)" x="-0.07 4.69 10.68 14.21 18.97" y="0" font-size="8.73" fill="#1f2c33"><tspan font-family="'Liberation Sans','Noto Sans CJK SC',sans-serif" font-size="8.80">10:52</tspan></text>
<line x1="1606.5" y1="467.5" x2="1606.5" y2="668.5" stroke="#adbcc3" stroke-width="1" stroke-dasharray="2 2"/>
<text xml:space="preserve" transform="translate(1608.30,700.40) rotate(-90)" x="-0.07 4.69 10.68 14.21 18.97" y="0" font-size="8.73" fill="#1f2c33"><tspan font-family="'Liberation Sans','Noto Sans CJK SC',sans-serif" font-size="8.80">10:53</tspan></text>
<line x1="1635.5" y1="467.5" x2="1635.5" y2="668.5" stroke="#adbcc3" stroke-width="1" stroke-dasharray="2 2"/>
<text xml:space="preserve" transform="translate(1637.30,700.40) rotate(-90)" x="-0.07 4.69 10.68 14.21 18.97" y="0" font-size="8.73" fill="#1f2c33"><tspan font-family="'Liberation Sans','Noto Sans CJK SC',sans-serif" font-size="8.80">10:54</tspan></text>
<line x1="1665.5" y1="467.5" x2="1665.5" y2="668.5" stroke="#adbcc3" stroke-width="1" stroke-dasharray="2 2"/>
<text xml:space="preserve" transform="translate(1667.30,700.40) rotate(-90)" x="-0.07 4.69 10.68 14.21 18.97" y="0" font-size="8.73" fill="#1f2c33"><tspan font-family="'Liberation Sans','Noto Sans CJK SC',sans-serif" font-size="8.80">10:55</tspan></text>
<line x1="1695.5" y1="467.5" x2="1695.5" y2="668.5" stroke="#adbcc3" stroke-width="1" stroke-dasharray="2 2"/>
<text xml:space="preserve" transform="translate(1697.30,700.40) rotate(-90)" x="-0.07 4.69 10.68 14.21 18.97" y="0" font-size="8.73" fill="#1f2c33"><tspan font-family="'Liberation Sans','Noto Sans CJK SC',sans-serif" font-size="8.80">10:56</tspan></text>
<line x1="1724.5" y1="467.5" x2="1724.5" y2="668.5" stroke="#adbcc3" stroke-width="1" stroke-dasharray="2 2"/>
<text xml:space="preserve" transform="translate(1726.30,700.40) rotate(-90)" x="-0.07 4.69 10.68 14.21 18.97" y="0" font-size="8.73" fill="#1f2c33"><tspan font-family="'Liberation Sans','Noto Sans CJK SC',sans-serif" font-size="8.80">10:57</tspan></text>
<line x1="1754.5" y1="467.5" x2="1754.5" y2="668.5" stroke="#adbcc3" stroke-width="1" stroke-dasharray="2 2"/>
<text xml:space="preserve" transform="translate(1756.30,700.40) rotate(-90)" x="-0.07 4.69 10.68 14.21 18.97" y="0" font-size="8.73" fill="#1f2c33"><tspan font-family="'Liberation Sans','Noto Sans CJK SC',sans-serif" font-size="8.80">10:58</tspan></text>
<line x1="1784.5" y1="467.5" x2="1784.5" y2="668.5" stroke="#adbcc3" stroke-width="1" stroke-dasharray="2 2"/>
<text xml:space="preserve" transform="translate(1786.30,700.40) rotate(-90)" x="-0.07 4.69 10.68 14.21 18.97" y="0" font-size="8.73" fill="#1f2c33"><tspan font-family="'Liberation Sans','Noto Sans CJK SC',sans-serif" font-size="8.80">10:59</tspan></text>
<line x1="1814.5" y1="467.5" x2="1814.5" y2="668.5" stroke="#9fb0b8" stroke-width="1" stroke-dasharray="2 2"/>
<text xml:space="preserve" transform="translate(1816.80,705.80) rotate(-90)" x="-0.14 5.48 12.57 16.72 22.34" y="0" font-size="10.30" fill="#e6393b"><tspan font-family="'Liberation Sans','Noto Sans CJK SC',sans-serif" font-size="10.61">11:00</tspan></text>
<line x1="1843.5" y1="467.5" x2="1843.5" y2="668.5" stroke="#adbcc3" stroke-width="1" stroke-dasharray="2 2"/>
<text xml:space="preserve" transform="translate(1845.30,700.40) rotate(-90)" x="-0.07 4.69 10.68 14.21 18.97" y="0" font-size="8.73" fill="#1f2c33"><tspan font-family="'Liberation Sans','Noto Sans CJK SC',sans-serif" font-size="8.80">11:01</tspan></text>
<line x1="1872.5" y1="467.5" x2="1872.5" y2="668.5" stroke="#adbcc3" stroke-width="1" stroke-dasharray="2 2"/>
<line x1="90.5" y1="461" x2="90.5" y2="672" stroke="#a3b3bb" stroke-width="1.200"/>
<line x1="87" y1="669.500" x2="1878" y2="669.500" stroke="#a3b3bb" stroke-width="1.200"/>
<path d="M90.5 457.500l3 6h-6z" fill="#fff" stroke="#a3b3bb" stroke-width="1"/>
<path d="M1883 669.500l-6 -3v6z" fill="#fff" stroke="#a3b3bb" stroke-width="1"/>
<text xml:space="preserve" transform="translate(94.00,741.00) rotate(-90)" x="-0.01 5.71 12.58 17.15 22.87 28.31 34.31 40.03 47.18 51.47 57.19" y="0" font-size="10.49" fill="#e6393b"><tspan font-family="'Liberation Sans','Noto Sans CJK SC',sans-serif" font-size="10.34">11-12</tspan> <tspan font-family="'Liberation Sans','Noto Sans CJK SC',sans-serif" font-size="10.34">10:01</tspan></text>
<text xml:space="preserve" transform="translate(1876.00,741.00) rotate(-90)" x="-0.01 5.71 12.58 17.15 22.87 28.31 34.31 40.03 47.18 51.47 57.19" y="0" font-size="10.49" fill="#e6393b"><tspan font-family="'Liberation Sans','Noto Sans CJK SC',sans-serif" font-size="10.34">11-12</tspan> <tspan font-family="'Liberation Sans','Noto Sans CJK SC',sans-serif" font-size="10.34">11:01</tspan></text>
<text xml:space="preserve" transform="translate(954.00,455.00)" x="-88.48 -80.48 -72.48 -61.86 -56.48 -48.48 -40.48 -32.48 -24.48 -16.48 -8.48 -0.48 7.52 15.52 23.52 31.52 39.52 47.52 55.52 63.52 71.52 79.52" y="0" font-size="14.93" fill="#1f2c33">Jin<tspan font-family="'Liberation Sans','Noto Sans CJK SC',sans-serif" font-size="13.41">:</tspan> Network Interface</text>
<polyline fill="none" stroke="#1a7c11" stroke-width="1.200" points="547.0,607.5 701.5,607.5 702.5,606.5 1425.5,606.5 1428.0,603.5 1466.0,603.5 1469.0,602.5 1571.0,602.5 1573.0,601.7 1635.0,601.7 1638.0,600.8 1696.0,600.8 1699.0,599.5 1757.0,599.5 1760.0,598.5 1810.0,598.5 1813.0,597.7 1866.0,597.7 1870.0,597.3"/>
<polyline fill="none" stroke="#f63100" stroke-width="1.200" points="1171.0,644.5 1490.5,644.5 1493.5,641.6 1525.5,641.6 1527.0,638.4 1533.0,635.5 1539.0,633.2 1545.0,630.5 1551.0,628.2 1557.0,625.6 1563.0,622.5 1569.0,619.9 1575.0,618.2 1581.0,615.0 1587.0,612.4 1593.0,610.6 1599.0,607.6 1605.0,605.4 1611.0,602.4 1617.0,600.0 1623.0,597.0 1629.0,594.9 1635.0,592.6 1641.0,589.7 1647.0,587.3 1653.0,584.7 1659.0,581.6 1665.0,579.7 1671.0,577.0 1677.0,574.1 1683.0,571.3 1689.0,569.6 1695.0,566.6 1701.0,564.3 1707.0,561.9 1713.0,559.2 1719.0,556.8 1725.0,553.7 1731.0,551.6 1737.0,548.7 1743.0,546.6 1749.0,544.0 1755.0,540.6 1761.0,538.1 1767.0,535.6 1773.0,533.8 1779.0,530.7 1785.0,528.4 1791.0,525.5 1797.0,523.1 1803.0,520.4 1809.0,517.8 1815.0,515.5 1821.0,513.0 1827.0,510.7 1833.0,507.9 1839.0,505.6 1845.0,503.0 1851.0,500.6 1857.0,497.7 1863.0,494.6 1869.0,492.8 1870.7,491.9"/>
<rect x="15.500" y="762.500" width="10" height="10" fill="#1a7c11" stroke="#000" stroke-width="1"/>
<rect x="15.500" y="776.500" width="10" height="10" fill="#f63100" stroke="#000" stroke-width="1"/>
<text xml:space="preserve" transform="translate(31.00,772.00)" x="-0.30 5.63 11.56 17.49 23.42 29.35 35.28 41.21 47.14 53.07 59.00 64.93 70.86" y="0" font-size="10.87" fill="#1f2c33">Network input</text>
<text x="135.500" y="772.0" font-size="10.800" fill="#1f2c33">[<tspan font-size="11.200" dy="-0.300">平均</tspan><tspan dy="0.300">]</tspan></text>
<text xml:space="preserve" transform="translate(187.00,772.00)" x="0.13 6.06 11.99 19.34 23.85 29.78 35.28 41.21 47.14 53.07 59.00" y="0" font-size="10.87" fill="#1f2c33"><tspan font-family="'Liberation Sans','Noto Sans CJK SC',sans-serif" font-size="10.20">749.55</tspan> Mbps</text>
<text xml:space="preserve" transform="translate(273.00,772.00)" x="0.13 6.06 11.99 19.34 23.85 29.78 35.28 41.21 47.14 53.07 59.00" y="0" font-size="10.87" fill="#1f2c33"><tspan font-family="'Liberation Sans','Noto Sans CJK SC',sans-serif" font-size="10.20">742.71</tspan> Mbps</text>
<text xml:space="preserve" transform="translate(359.00,772.00)" x="0.13 6.06 11.99 19.34 23.85 29.78 35.28 41.21 47.14 53.07 59.00" y="0" font-size="10.87" fill="#1f2c33"><tspan font-family="'Liberation Sans','Noto Sans CJK SC',sans-serif" font-size="10.20">744.38</tspan> Mbps</text>
<text xml:space="preserve" transform="translate(445.00,772.00)" x="0.13 6.06 11.99 19.34 23.85 29.78 35.28 41.21 47.14 53.07 59.00" y="0" font-size="10.87" fill="#1f2c33"><tspan font-family="'Liberation Sans','Noto Sans CJK SC',sans-serif" font-size="10.20">749.55</tspan> Mbps</text>
<text xml:space="preserve" transform="translate(31.00,786.00)" x="-0.30 5.63 11.56 17.49 23.42 29.35 35.28 41.21 47.14 53.07 59.00 64.93 70.86 76.79" y="0" font-size="10.87" fill="#1f2c33">Network Output</text>
<text x="135.500" y="786.0" font-size="10.800" fill="#1f2c33">[<tspan font-size="11.200" dy="-0.300">平均</tspan><tspan dy="0.300">]</tspan></text>
<text xml:space="preserve" transform="translate(187.00,786.00)" x="0.13 6.06 11.99 19.34 23.85 29.78 35.28 41.21 47.14 53.07 59.00" y="0" font-size="10.87" fill="#1f2c33"><tspan font-family="'Liberation Sans','Noto Sans CJK SC',sans-serif" font-size="10.20">822.27</tspan> Mbps</text>
<text xml:space="preserve" transform="translate(273.00,786.00)" x="0.13 6.06 11.99 19.34 23.85 29.78 35.28 41.21 47.14 53.07 59.00" y="0" font-size="10.87" fill="#1f2c33"><tspan font-family="'Liberation Sans','Noto Sans CJK SC',sans-serif" font-size="10.20">716.48</tspan> Mbps</text>
<text xml:space="preserve" transform="translate(359.00,786.00)" x="0.13 6.06 11.99 19.34 23.85 29.78 35.28 41.21 47.14 53.07 59.00" y="0" font-size="10.87" fill="#1f2c33"><tspan font-family="'Liberation Sans','Noto Sans CJK SC',sans-serif" font-size="10.20">742.88</tspan> Mbps</text>
<text xml:space="preserve" transform="translate(445.00,786.00)" x="0.13 6.06 11.99 19.34 23.85 29.78 35.28 41.21 47.14 53.07 59.00" y="0" font-size="10.87" fill="#1f2c33"><tspan font-family="'Liberation Sans','Noto Sans CJK SC',sans-serif" font-size="10.20">822.27</tspan> Mbps</text>
<text x="208" y="758.300" font-size="11.500" fill="#1f2c33">最新</text>
<text x="294" y="758.300" font-size="11.500" fill="#1f2c33">最小</text>
<text x="380" y="758.300" font-size="11.500" fill="#1f2c33">平均</text>
<text x="466" y="758.300" font-size="11.500" fill="#1f2c33">最大</text>
<line x1="1556.6" y1="472.6" x2="1642.9" y2="543.8" stroke="#ff0a0a" stroke-width="2.200" stroke-linecap="round"/>
<path d="M1648.7 548.6L1638.3 545.5L1642.9 543.8L1643.7 539.0z" fill="#ff0a0a"/>
<line x1="1448.6" y1="732.1" x2="1502.4" y2="658.2" stroke="#ff0a0a" stroke-width="2.200" stroke-linecap="round"/>
<path d="M1506.8 652.1L1504.3 662.7L1502.4 658.2L1497.5 657.7z" fill="#ff0a0a"/>
</svg>
<div class="a" style="left:1552px;top:441px;font-size:14.450px;line-height:20px;transform:scaleY(.9);transform-origin:50% 60%;-webkit-text-stroke:0.150px #ff0a0a;color:#ff0a0a;text-shadow:1.2px 0.0px 0.400px #fff,1.0px 0.6px 0.400px #fff,0.6px 1.0px 0.400px #fff,0.0px 1.2px 0.400px #fff,-0.6px 1.0px 0.400px #fff,-1.0px 0.6px 0.400px #fff,-1.2px 0.0px 0.400px #fff,-1.0px -0.6px 0.400px #fff,-0.6px -1.0px 0.400px #fff,-0.0px -1.2px 0.400px #fff,0.6px -1.0px 0.400px #fff,1.0px -0.6px 0.400px #fff,2.4px 0.0px 0.400px #fff,2.1px 1.2px 0.400px #fff,1.2px 2.1px 0.400px #fff,0.0px 2.4px 0.400px #fff,-1.2px 2.1px 0.400px #fff,-2.1px 1.2px 0.400px #fff,-2.4px 0.0px 0.400px #fff,-2.1px -1.2px 0.400px #fff,-1.2px -2.1px 0.400px #fff,-0.0px -2.4px 0.400px #fff,1.2px -2.1px 0.400px #fff,2.1px -1.2px 0.400px #fff,3.1px 0.0px 1.200px rgba(0,0,0,.16),2.7px 1.5px 1.200px rgba(0,0,0,.16),1.6px 2.7px 1.200px rgba(0,0,0,.16),0.0px 3.1px 1.200px rgba(0,0,0,.16),-1.5px 2.7px 1.200px rgba(0,0,0,.16),-2.7px 1.5px 1.200px rgba(0,0,0,.16),-3.1px 0.0px 1.200px rgba(0,0,0,.16),-2.7px -1.6px 1.200px rgba(0,0,0,.16),-1.6px -2.7px 1.200px rgba(0,0,0,.16),-0.0px -3.1px 1.200px rgba(0,0,0,.16),1.6px -2.7px 1.200px rgba(0,0,0,.16),2.7px -1.6px 1.200px rgba(0,0,0,.16)">此处为该主机向其他主机不断传包的网络波动</div>
<div class="a" style="left:1425px;top:749px;font-size:14.450px;line-height:20px;transform:scaleY(.9);transform-origin:50% 60%;-webkit-text-stroke:0.150px #ff0a0a;color:#ff0a0a;text-shadow:1.2px 0.0px 0.400px #fff,1.0px 0.6px 0.400px #fff,0.6px 1.0px 0.400px #fff,0.0px 1.2px 0.400px #fff,-0.6px 1.0px 0.400px #fff,-1.0px 0.6px 0.400px #fff,-1.2px 0.0px 0.400px #fff,-1.0px -0.6px 0.400px #fff,-0.6px -1.0px 0.400px #fff,-0.0px -1.2px 0.400px #fff,0.6px -1.0px 0.400px #fff,1.0px -0.6px 0.400px #fff,2.4px 0.0px 0.400px #fff,2.1px 1.2px 0.400px #fff,1.2px 2.1px 0.400px #fff,0.0px 2.4px 0.400px #fff,-1.2px 2.1px 0.400px #fff,-2.1px 1.2px 0.400px #fff,-2.4px 0.0px 0.400px #fff,-2.1px -1.2px 0.400px #fff,-1.2px -2.1px 0.400px #fff,-0.0px -2.4px 0.400px #fff,1.2px -2.1px 0.400px #fff,2.1px -1.2px 0.400px #fff,3.1px 0.0px 1.200px rgba(0,0,0,.16),2.7px 1.5px 1.200px rgba(0,0,0,.16),1.6px 2.7px 1.200px rgba(0,0,0,.16),0.0px 3.1px 1.200px rgba(0,0,0,.16),-1.5px 2.7px 1.200px rgba(0,0,0,.16),-2.7px 1.5px 1.200px rgba(0,0,0,.16),-3.1px 0.0px 1.200px rgba(0,0,0,.16),-2.7px -1.6px 1.200px rgba(0,0,0,.16),-1.6px -2.7px 1.200px rgba(0,0,0,.16),-0.0px -3.1px 1.200px rgba(0,0,0,.16),1.6px -2.7px 1.200px rgba(0,0,0,.16),2.7px -1.6px 1.200px rgba(0,0,0,.16)">此处为之前访问网站一张图片的波动</div>
<div class="a" style="left:0;top:0;width:5px;height:35px;background:linear-gradient(90deg,rgba(40,50,90,.22),rgba(40,50,90,0))"></div>
<div class="a" style="left:0;top:111px;width:13px;height:685px;background:linear-gradient(90deg,rgba(60,70,80,.2) 0,rgba(60,70,80,.07) 4px,rgba(60,70,80,.03) 8px,rgba(60,70,80,0) 13px)"></div>
</body></html>
